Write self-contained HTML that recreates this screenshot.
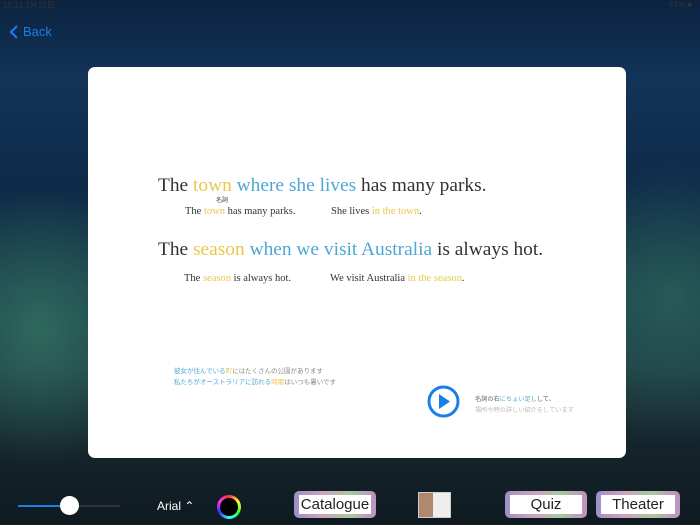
<!DOCTYPE html>
<html><head><meta charset="utf-8"><style>
body{margin:0;width:700px;height:525px;overflow:hidden;position:relative;font-family:"Liberation Sans","Noto Sans CJK JP",sans-serif;
background:
radial-gradient(ellipse 120px 140px at 40px 330px,rgba(60,140,110,.55),transparent),
radial-gradient(ellipse 120px 140px at 670px 300px,rgba(50,120,100,.5),transparent),
linear-gradient(180deg,#0c2340 0%,#123458 15%,#0f2a48 35%,#1a3d4a 55%,#1e3c44 70%,#15242c 85%,#0f1a20 100%);}
.card{position:absolute;left:88px;top:67px;width:538px;height:391px;background:#fff;border-radius:7px;}
.s{position:absolute;font-family:"Liberation Serif",serif;color:#333;white-space:nowrap}
.y{color:#e8c84a}.b{color:#4ea7d3}
.btn{position:absolute;top:491px;height:27px;border-radius:5px;background:linear-gradient(90deg,#9a90c8,#d0a0c0,#a8c8a0,#c090c0);}
.btn span{position:absolute;left:5px;right:5px;top:4px;bottom:4px;background:#fff;font-size:15px;color:#222;text-align:center;line-height:19px}
.j{position:absolute;font-size:6.5px;white-space:nowrap;color:#888}
</style></head><body>
<div style="position:absolute;left:3px;top:0;font-size:8px;color:#333">15:13 3月13日</div>
<div style="position:absolute;right:8px;top:0;font-size:8px;color:#333">64% ■</div>
<svg style="position:absolute;left:9px;top:25px" width="10" height="14"><path d="M8 1L2 7l6 6" stroke="#1a7fe8" stroke-width="2" fill="none"/></svg>
<div style="position:absolute;left:23px;top:24px;font-size:13px;color:#1a7fe8">Back</div>
<div class="card">
<div class="s" style="left:70px;top:108px;font-size:19.4px">The <span class="y">town</span> <span class="b">where she lives</span> has many parks.</div>
<div class="j" style="left:128px;top:128px;font-size:6px;color:#444">名詞</div>
<div class="s" style="left:97px;top:139px;font-size:10.5px">The <span class="y">town</span> has many parks.</div>
<div class="s" style="left:243px;top:139px;font-size:10.5px">She lives <span class="y">in the town</span>.</div>
<div class="s" style="left:70px;top:172px;font-size:19.4px">The <span class="y">season</span> <span class="b">when we visit Australia</span> is always hot.</div>
<div class="s" style="left:96px;top:206px;font-size:10.5px">The <span class="y">season</span> is always hot.</div>
<div class="s" style="left:242px;top:206px;font-size:10.5px">We visit Australia <span class="y">in the season</span>.</div>
<div class="j" style="left:86px;top:298px"><span class="b">彼女が住んでいる</span><span class="y">町</span>にはたくさんの公園があります</div>
<div class="j" style="left:86px;top:309px"><span class="b">私たちがオーストラリアに訪れる</span><span class="y">時期</span>はいつも暑いです</div>
<svg style="position:absolute;left:339px;top:318px" width="33" height="33"><circle cx="16.5" cy="16.5" r="14.5" stroke="#1a7fe8" stroke-width="3" fill="none"/><path d="M12 9l11 7.5-11 7.5z" fill="#1a7fe8"/></svg>
<div class="j" style="left:387px;top:327px;color:#666;font-size:6.2px">名詞の右<span class="b">にちょい足し</span>して、</div>
<div class="j" style="left:387px;top:338px;color:#bbb;font-size:6.2px">場所や時の詳しい紹介をしています</div>
</div>
<div style="position:absolute;left:18px;top:505px;width:52px;height:2px;background:#1a7fe8"></div>
<div style="position:absolute;left:70px;top:505px;width:50px;height:2px;background:#333"></div>
<div style="position:absolute;left:60px;top:496px;width:19px;height:19px;border-radius:50%;background:#fff"></div>
<div style="position:absolute;left:157px;top:499px;font-size:12px;color:#fff">Arial ⌃</div>
<div style="position:absolute;left:217px;top:495px;width:24px;height:24px;border-radius:50%;background:conic-gradient(#f33,#ff3,#3f3,#3ff,#33f,#f3f,#f33)"></div>
<div style="position:absolute;left:220px;top:498px;width:18px;height:18px;border-radius:50%;background:#000"></div>
<div class="btn" style="left:294px;width:82px"><span>Catalogue</span></div>
<div style="position:absolute;left:418px;top:492px;width:31px;height:24px;background:#eee;border:1px solid #ccc"><div style="width:14px;height:24px;background:#b08870"></div></div>
<div class="btn" style="left:505px;width:82px"><span>Quiz</span></div>
<div class="btn" style="left:596px;width:84px"><span>Theater</span></div>
</body></html>
